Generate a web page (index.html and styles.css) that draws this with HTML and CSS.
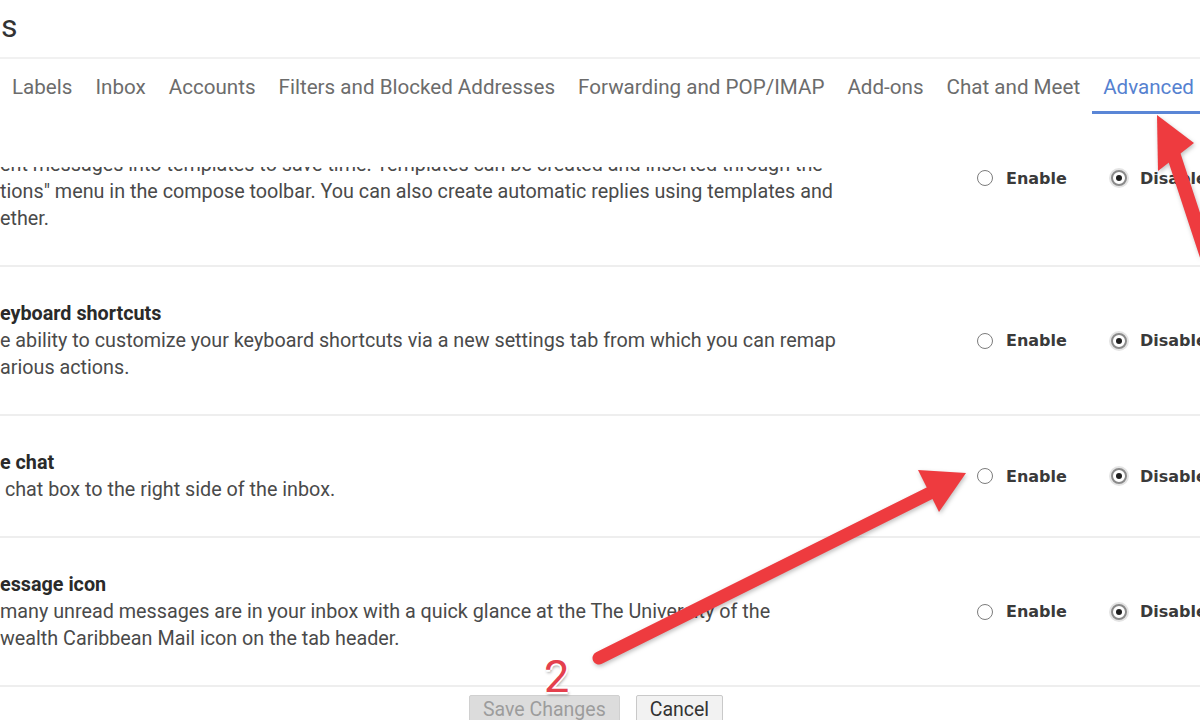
FILE: index.html
```html
<!DOCTYPE html>
<html>
<head lang="en">
<meta charset="UTF-8">
<title>Settings</title>
<link rel="stylesheet" href="styles.css">
</head>
<body>
<div class="page">
    <div class="head">
        <h1 class="title">s</h1>
    </div>
    <div class="tabs">
        <a class="tab">Labels</a>
        <a class="tab">Inbox</a>
        <a class="tab">Accounts</a>
        <a class="tab">Filters and Blocked Addresses</a>
        <a class="tab">Forwarding and POP/IMAP</a>
        <a class="tab">Add-ons</a>
        <a class="tab">Chat and Meet</a>
        <a class="tab tab-on">Advanced</a>
    </div>
    <div class="panel">
        <div class="row row-first">
            <div class="desc">
                <div class="name">Templates</div>
                ent messages into templates to save time. Templates can be created and inserted through the<br>
                tions" menu in the compose toolbar. You can also create automatic replies using templates and<br>
                ether.
            </div>
            <div class="opts">
                <label class="opt"><span class="radio"></span>Enable</label>
                <label class="opt"><span class="radio radio-on"></span>Disable</label>
            </div>
        </div>
        <div class="row">
            <div class="desc">
                <div class="name">eyboard shortcuts</div>
                e ability to customize your keyboard shortcuts via a new settings tab from which you can remap<br>
                arious actions.
            </div>
            <div class="opts">
                <label class="opt"><span class="radio"></span>Enable</label>
                <label class="opt"><span class="radio radio-on"></span>Disable</label>
            </div>
        </div>
        <div class="row">
            <div class="desc">
                <div class="name">e chat</div>
                &nbsp;chat box to the right side of the inbox.
            </div>
            <div class="opts">
                <label class="opt"><span class="radio"></span>Enable</label>
                <label class="opt"><span class="radio radio-on"></span>Disable</label>
            </div>
        </div>
        <div class="row">
            <div class="desc">
                <div class="name">essage icon</div>
                many unread messages are in your inbox with a quick glance at the The University of the<br>
                wealth Caribbean Mail icon on the tab header.
            </div>
            <div class="opts">
                <label class="opt"><span class="radio"></span>Enable</label>
                <label class="opt"><span class="radio radio-on"></span>Disable</label>
            </div>
        </div>
        <div class="actions">
            <button class="btn btn-off">Save Changes</button>
            <button class="btn">Cancel</button>
        </div>
    </div>

    <svg class="marks" width="1200" height="720" viewBox="0 0 1200 720">
        <g class="arrow">
            <line x1="1172" y1="150" x2="1218" y2="290" stroke-width="14" stroke-linecap="round"/>
            <polygon points="1157,115 1194,143 1158,171"/>
        </g>
        <g class="arrow">
            <line x1="599" y1="658" x2="936" y2="490" stroke-width="13" stroke-linecap="round"/>
            <polygon points="966,473 918,470 939,512"/>
        </g>
    </svg>
    <div class="step">2</div>
</div>
</body>
</html>
```

FILE: styles.css
```css
*{
    margin:0;
    padding:0;
    box-sizing:border-box;
}
html,body{
    width:1200px;
    height:720px;
    overflow:hidden;
    background:#fff;
}
body{
    font-family:Roboto,"Liberation Sans",sans-serif;
    color:#444;
}
.page{
    position:relative;
    width:1200px;
    height:720px;
    overflow:hidden;
}
.head{
    height:59px;
    border-bottom:2px solid #f1f1f1;
}
.title{
    font-weight:400;
    font-size:32px;
    line-height:52px;
    color:#333;
    padding-left:1px;
}
.tabs{
    display:flex;
    gap:1px;
    height:55px;
    padding-left:1px;
    white-space:nowrap;
}
.tab{
    display:flex;
    align-items:center;
    padding:4px 11px 0;
    border-bottom:3px solid transparent;
    font-size:20.6px;
    color:#6c6c6c;
}
.tab-on{
    color:#5581d0;
    border-bottom-color:#5a86d6;
}
.panel{
    margin-top:53px;
    height:553px;
    overflow:hidden;
}
.row{
    display:flex;
    align-items:center;
    padding:33px 0;
    border-bottom:2px solid #eee;
}
.row-first{
    margin-top:-76px;
}
.desc{
    width:977px;
    flex:none;
    font-size:19.75px;
    line-height:27px;
    color:#4a4a4a;
    white-space:nowrap;
}
.name{
    font-weight:700;
    color:#2a2a2a;
}
.opts{
    display:flex;
    gap:44px;
    white-space:nowrap;
}
.opt{
    display:flex;
    align-items:center;
    gap:13px;
    font-family:"DejaVu Sans",sans-serif;
    font-weight:700;
    font-size:16px;
    color:#3a3a3a;
}
.radio{
    position:relative;
    width:16px;
    height:16px;
    border-radius:50%;
    border:1.5px solid #7c7c7c;
    background:#fff;
}
.radio-on{
    border:2px solid #8a8a8a;
    box-shadow:0 0 0 2px #e4e4e4;
}
.radio-on::after{
    content:"";
    position:absolute;
    left:3px;
    top:3px;
    width:6px;
    height:6px;
    border-radius:50%;
    background:#1e1e1e;
}
.actions{
    display:flex;
    gap:16px;
    padding-left:469px;
    margin-top:8px;
}
.btn{
    height:36px;
    padding:0 13px 8px;
    font-family:Roboto,"Liberation Sans",sans-serif;
    font-size:19.5px;
    background:#f2f2f2;
    border:1px solid #c9c9c9;
    border-radius:2px;
    color:#333;
}
.btn-off{
    background:#dcdcdc;
    border-color:#d0d0d0;
    color:#9c9c9c;
}
.marks{
    position:absolute;
    top:0;
    left:0;
    pointer-events:none;
    filter:drop-shadow(1px 2px 2px rgba(0,0,0,0.25));
}
.arrow line{
    stroke:#ee3b3f;
}
.arrow polygon{
    fill:#ee3b3f;
}
.step{
    position:absolute;
    left:544px;
    top:653px;
    font-size:45px;
    font-weight:400;
    line-height:48px;
    color:#e4404d;
    text-shadow:2px 0 0 #fff,-2px 0 0 #fff,0 2px 0 #fff,0 -2px 0 #fff,1px 3px 3px rgba(0,0,0,0.35);
}
```
